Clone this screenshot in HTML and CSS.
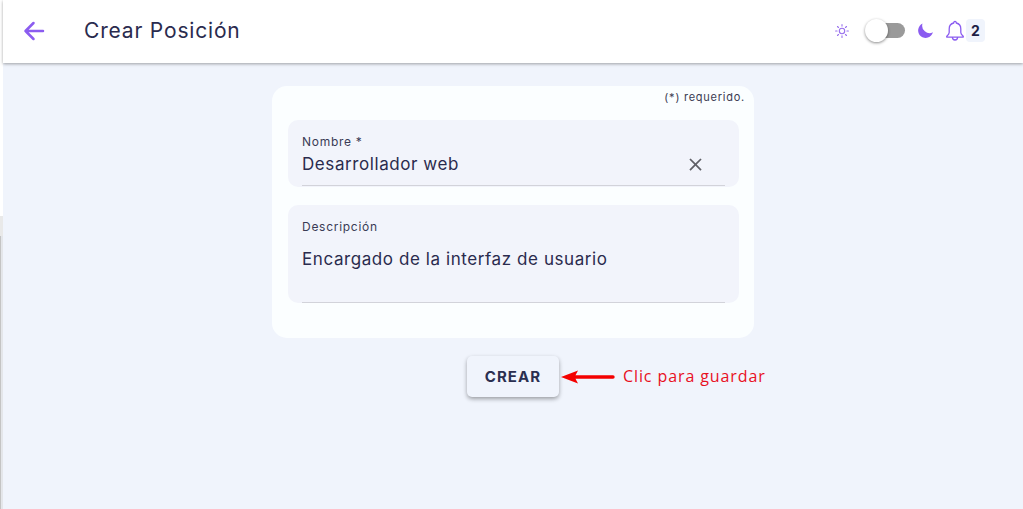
FILE: index.html
```html
<!DOCTYPE html>
<html lang="es">
<head>
<meta charset="utf-8">
<title>Crear Posición</title>
<link rel="stylesheet" href="styles.css">
</head>
<body>
<div class="edge"><div class="edge-top"></div><div class="edge-mid"></div><div class="edge-low"></div></div>
<div class="app">
  <header class="topbar">
    <div class="left">
      <svg class="back" width="24" height="24" viewBox="0 0 24 24"><path d="M21 12H3.500M11.500 4l-8 8 8 8" fill="none" stroke="#8b5cf0" stroke-width="2.500" stroke-linecap="round" stroke-linejoin="round"/></svg>
      <h1 class="title">Crear Posición</h1>
    </div>
    <div class="right">
      <svg class="sun" width="16" height="16" viewBox="0 0 16 16"><circle cx="8" cy="8" r="2.700" fill="none" stroke="#9a72ee" stroke-width="1.100"/><path d="M8 1.600v1.500M8 12.900v1.500M1.600 8h1.500M12.900 8h1.500M3.500 3.500l1 1M11.500 11.500l1 1M3.500 12.500l1-1M11.500 4.500l1-1" stroke="#9a72ee" stroke-width="1.100" stroke-linecap="round"/></svg>
      <div class="switch"><div class="track"></div><div class="thumb"></div></div>
      <svg class="moon" width="16" height="16" viewBox="0 0 16 16"><path d="M4.500 .6A7.500 7.500 0 1 0 14.900 9.300 7.400 7.400 0 0 1 4.500 .6Z" fill="#8b5cf0"/></svg>
      <svg class="bell" width="20" height="22" viewBox="0 0 20 22"><path d="M10 1.500a1.300 1.300 0 0 1 1.300 1.500c3 .6 4.500 3 4.500 6v3.500c0 1.500 1 2.500 2.400 3.800.3.400.1 .9-.4 .9H2.200c-.5 0-.7-.5-.4-.9C3.200 15 4.200 14 4.200 12.500V9c0-3 1.500-5.400 4.500-6A1.300 1.300 0 0 1 10 1.500Z" fill="none" stroke="#8b5cf0" stroke-width="1.300" stroke-linejoin="round"/><path d="M7.400 17c0 1.700 1.100 3 2.600 3s2.600-1.300 2.600-3" fill="none" stroke="#8b5cf0" stroke-width="1.300"/></svg>
      <span class="badge">2</span>
    </div>
  </header>
  <main class="content">
    <section class="card">
      <p class="req">(*) requerido.</p>
      <div class="field field-name">
        <label class="label">Nombre *</label>
        <div class="value-row">
          <span class="value">Desarrollador web</span>
          <svg class="clear" width="21" height="21" viewBox="0 0 24 24"><path d="M19 6.410 17.590 5 12 10.590 6.410 5 5 6.410 10.590 12 5 17.590 6.410 19 12 13.410 17.590 19 19 17.590 13.410 12z" fill="#5f5f66"/></svg>
        </div>
      </div>
      <div class="field field-desc">
        <label class="label">Descripción</label>
        <span class="value desc-value">Encargado de la interfaz de usuario</span>
      </div>
    </section>
    <div class="actions">
      <button class="btn" type="button">CREAR</button>
      <div class="note">
        <svg class="arrow" width="54" height="14" viewBox="0 0 54 14"><path d="M0 7 17 .5 14.500 5.300H52a1.700 1.700 0 0 1 0 3.400H14.500L17 13.500Z" fill="#f40000"/></svg>
        <span class="note-text">Clic para guardar</span>
      </div>
    </div>
  </main>
</div>
</body>
</html>
```
FILE: styles.css
```css
* { box-sizing: border-box; }
html, body { margin: 0; height: 100%; overflow: hidden; }
body { display: flex; background: #f0f4fc; font-family: Inter, "Noto Sans", sans-serif; color: #2a2b4e; }
.edge { width: 3px; flex: none; display: flex; flex-direction: column; }
.edge-top { height: 216px; background: #fff; }
.edge-mid { height: 20px; background: #e9e9e9; }
.edge-low { flex: 1; background: linear-gradient(90deg, #c4c4c4 0 1px, #e4e6ea 1px 3px); }
.app { flex: 1; min-width: 0; display: flex; flex-direction: column; }
.topbar { height: 63px; flex: none; background: #fff; display: flex; align-items: center; justify-content: space-between; padding: 0 38px 2px 19px; box-shadow: 0 1px 3px rgba(0,0,0,.35); position: relative; }
.left { display: flex; align-items: center; }
.title { margin: 0 0 0 38px; font-size: 21px; font-weight: 400; letter-spacing: .82px; color: #2a2b4e; }
.right { display: flex; align-items: center; }
.sun { margin-right: 15px; }
.switch { position: relative; width: 40px; height: 24px; margin-right: 13px; }
.track { position: absolute; left: 4px; right: 0; top: 4px; height: 15px; border-radius: 8px; background: #9a9a9a; }
.thumb { position: absolute; left: 0; top: 0; width: 23px; height: 23px; border-radius: 50%; background: #fff; box-shadow: 0 1px 3px rgba(0,0,0,.45); }
.moon { margin-right: 11px; }
.bell { margin-right: 1px; }
.badge { width: 19px; height: 23px; border-radius: 4px; background: #f0f4fc; font-size: 14px; font-weight: 700; color: #1e1f45; display: flex; align-items: center; justify-content: center; }
.content { flex: 1; display: flex; flex-direction: column; align-items: center; padding-top: 23px; }
.card { width: 482px; height: 252px; background: #fbfeff; border-radius: 15px; padding: 0 15px 0 16px; }
.req { margin: 0 -6px 0 0; height: 34px; padding-top: 4px; font-size: 11px; line-height: 14px; text-align: right; letter-spacing: .75px; color: #3a3b52; }
.field { background: #f2f4fb; border-radius: 10px; padding: 0 14px; }
.field-name { height: 67px; }
.field-desc { height: 98px; margin-top: 18px; }
.label { display: block; font-size: 12px; line-height: 16px; letter-spacing: .72px; color: #3a3b55; padding-top: 14px; box-sizing: content-box; }
.value-row { display: flex; align-items: flex-start; justify-content: space-between; height: 36px; padding-top: 4px; padding-right: 19px; border-bottom: 1px solid #d2d3da; }
.value { font-size: 17px; letter-spacing: .58px; color: #2a2b4e; line-height: 20px; }
.desc-value { display: block; height: 68px; padding-top: 14px; border-bottom: 1px solid #d2d3da; }
.actions { position: relative; margin-top: 18px; display: flex; justify-content: center; width: 100%; }
.btn { width: 92px; height: 41px; border: 0; border-radius: 5px; background: #f0f4fc; box-shadow: 0 2px 4px -1px rgba(0,0,0,.25), 0 2px 5px rgba(0,0,0,.2); font-family: Inter, sans-serif; font-size: 15px; font-weight: 700; letter-spacing: 1.1px; color: #2a2f50; }
.note { position: absolute; left: 558px; top: 7px; display: flex; align-items: center; height: 28px; }
.arrow { display: block; margin-right: 8px; }
.note-text { font-family: "Open Sans", "Noto Sans", sans-serif; font-size: 16px; letter-spacing: .9px; color: #e8101e; position: relative; top: -1px; }
```
